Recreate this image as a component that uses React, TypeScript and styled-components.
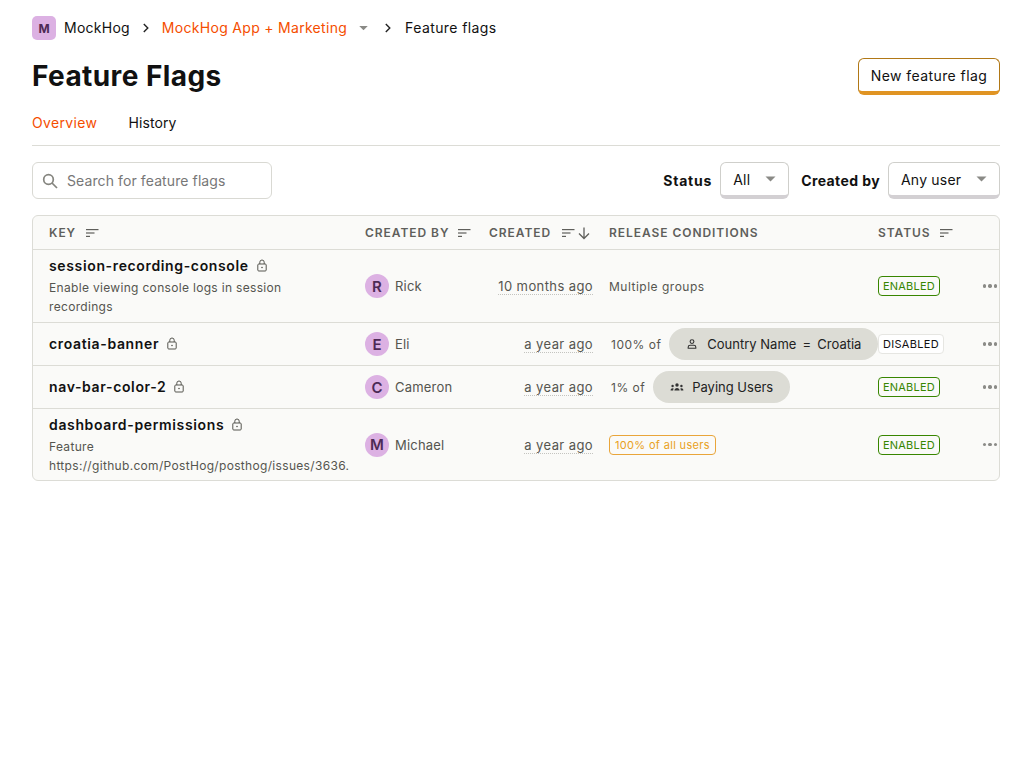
import React from "react";
import styled, { createGlobalStyle } from "styled-components";

const GlobalStyle = createGlobalStyle`
  html, body { margin: 0; padding: 0; background: #fff; }
  body { font-family: Inter, "Liberation Sans", sans-serif; color: #111; font-size: 14px; }
`;

type Flag = {
  key: string;
  desc?: string;
  user: string;
  created: string;
  status: "ENABLED" | "DISABLED";
  rowHeight: number;
};

const flags: Flag[] = [
  { key: "session-recording-console", desc: "Enable viewing console logs in session recordings", user: "Rick", created: "10 months ago", status: "ENABLED", rowHeight: 73 },
  { key: "croatia-banner", user: "Eli", created: "a year ago", status: "DISABLED", rowHeight: 43 },
  { key: "nav-bar-color-2", user: "Cameron", created: "a year ago", status: "ENABLED", rowHeight: 43 },
  { key: "dashboard-permissions", desc: "Feature https://github.com/PostHog/posthog/issues/3636.", user: "Michael", created: "a year ago", status: "ENABLED", rowHeight: 71 },
];

const SortIcon = () => (
  <svg width="14" height="10" viewBox="0 0 14 10" fill="#5f5f5b">
    <rect x="1" y="1" width="12.5" height="1.2" />
    <rect x="1" y="4.4" width="8.5" height="1.2" />
    <rect x="1" y="7.8" width="4" height="1.2" />
  </svg>
);

const LockIcon = () => (
  <svg width="12" height="13" viewBox="0 0 12 13" fill="none" stroke="#55554f" strokeWidth="1">
    <rect x="1.8" y="5" width="8.4" height="7" rx="1" />
    <path d="M3.8 5V3.2a2.2 2.2 0 0 1 4.4 0V5" />
    <circle cx="6" cy="8.5" r="0.8" fill="#55554f" stroke="none" />
  </svg>
);

const Caret = ({ color = "#8a8a86" }: { color?: string }) => (
  <svg width="11" height="6" viewBox="0 0 11 6" fill={color}>
    <path d="M0.5 0.5h10L5.5 5.5z" />
  </svg>
);

const Chevron = () => (
  <svg width="8" height="10" viewBox="0 0 8 10" fill="none" stroke="#222" strokeWidth="1.4">
    <path d="M1.8 1l4 4-4 4" />
  </svg>
);

const SearchIcon = () => (
  <svg width="18" height="18" viewBox="0 0 18 18" fill="none" stroke="#85857f" strokeWidth="1.7">
    <circle cx="7.5" cy="7.5" r="4.8" />
    <path d="M11 11l5 5" />
  </svg>
);

const PersonIcon = () => (
  <svg width="12" height="12" viewBox="0 0 12 12" fill="none" stroke="#333" strokeWidth="1.1">
    <circle cx="6" cy="3.6" r="1.9" />
    <path d="M2.2 10.2V9c0-1 1-1.7 2-1.7h3.6c1 0 2 .7 2 1.7v1.2z" />
  </svg>
);

const CohortIcon = () => (
  <svg width="14" height="12" viewBox="0 0 14 12" fill="#333">
    <circle cx="7" cy="4" r="1.7" />
    <circle cx="2.6" cy="5" r="1.2" />
    <circle cx="11.4" cy="5" r="1.2" />
    <path d="M4.4 9.5c0-1.6 1.2-2.6 2.6-2.6s2.6 1 2.6 2.6z" />
    <path d="M.6 9.5c0-1.3.8-2.2 2-2.2.4 0 .7.1 1 .2-.3.6-.4 1.2-.4 2z" />
    <path d="M13.4 9.5c0-1.3-.8-2.2-2-2.2-.4 0-.7.1-1 .2.3.6.4 1.2.4 2z" />
  </svg>
);

const ArrowDown = () => (
  <svg width="14" height="14" viewBox="0 0 14 14" fill="none" stroke="#5f5f5b" strokeWidth="1.3">
    <path d="M7 1.5v11M2 7.5l5 5 5-5" />
  </svg>
);

const Page = styled.div`
  padding: 16px 32px 0;
`;

const Breadcrumbs = styled.nav`
  display: flex;
  align-items: center;
  height: 24px;
`;

const LogoBadge = styled.div`
  width: 24px;
  height: 24px;
  border-radius: 5px;
  background: #dcb1e3;
  color: #4c2a55;
  font-size: 12px;
  font-weight: 700;
  display: flex;
  align-items: center;
  justify-content: center;
  margin-right: 8px;
`;

const Crumb = styled.span<{ $accent?: boolean; $spacing?: number }>`
  font-size: 14px;
  line-height: 22px;
  padding-bottom: 1px;
  letter-spacing: ${(p) => p.$spacing ?? 0.25}px;
  color: ${(p) => (p.$accent ? "#f54e00" : "#111")};
`;

const CrumbSep = styled.span<{ $wide?: boolean }>`
  display: flex;
  margin: ${(p) => (p.$wide ? "0 13px 0 9px" : "0 12px")};
`;

const CrumbCaret = styled.span`
  display: flex;
  margin-left: 11px;
  margin-right: 6px;
  transform: scale(0.85);
`;

const TitleRow = styled.header`
  display: flex;
  justify-content: space-between;
  align-items: flex-start;
  margin-top: 18px;
  height: 37px;
`;

const Title = styled.h1`
  margin: 0;
  font-size: 28px;
  line-height: 37px;
  font-weight: 700;
  letter-spacing: 0.42px;
`;

const NewButton = styled.button`
  box-sizing: border-box;
  height: 37px;
  width: 142px;
  padding: 0;
  border: 1px solid #b17816;
  border-bottom-width: 4px;
  border-bottom-color: #e09423;
  border-radius: 6px;
  background: #fff;
  font: 400 14px Inter, "Liberation Sans", sans-serif;
  letter-spacing: 0.42px;
  color: #111;
`;

const Tabs = styled.div`
  display: flex;
  gap: 31px;
  margin-top: 16px;
  height: 34px;
  border-bottom: 1px solid #dcdcd6;
`;

const Tab = styled.span<{ $active?: boolean }>`
  font-size: 14px;
  line-height: 24px;
  letter-spacing: ${(p) => (p.$active ? 0.35 : 0.1)}px;
  color: ${(p) => (p.$active ? "#f54e00" : "#111")};
`;

const FilterRow = styled.div`
  display: flex;
  justify-content: space-between;
  align-items: center;
  margin-top: 16px;
  height: 37px;
`;

const Search = styled.div`
  box-sizing: border-box;
  width: 240px;
  height: 37px;
  padding: 0 8px;
  display: flex;
  align-items: center;
  gap: 8px;
  border: 1px solid #d9d9d3;
  border-radius: 6px;
  font-size: 14px;
  letter-spacing: 0.1px;
  color: #777;
`;

const Filters = styled.div`
  display: flex;
  align-items: center;
`;

const FilterLabel = styled.span<{ $spacing: number }>`
  font-size: 14px;
  font-weight: 700;
  letter-spacing: ${(p) => p.$spacing}px;
  margin-right: 8px;
`;

const Select = styled.div<{ $width: number; $gapAfter?: number }>`
  box-sizing: border-box;
  width: ${(p) => p.$width}px;
  height: 37px;
  padding: 0 12px;
  margin-right: ${(p) => p.$gapAfter ?? 0}px;
  display: flex;
  align-items: center;
  justify-content: space-between;
  border: 1px solid #cfcfcb;
  border-bottom: 4px solid #d3d0d3;
  border-radius: 6px;
  font-size: 14px;
  letter-spacing: 0.2px;
`;

const TableWrap = styled.div`
  margin-top: 16px;
  border: 1px solid #dcdcd6;
  border-radius: 6px;
  overflow: hidden;
  background: #fafaf8;
`;

const Table = styled.table`
  width: 100%;
  table-layout: fixed;
  border-collapse: separate;
  border-spacing: 0;
`;

const Th = styled.th<{ $width?: number; $first?: boolean }>`
  box-sizing: border-box;
  width: ${(p) => (p.$width ? `${p.$width}px` : "auto")};
  height: 34px;
  padding: 0 0 0 ${(p) => (p.$first ? "16px" : "8px")};
  text-align: left;
  font-size: 12px;
  font-weight: 600;
  letter-spacing: 0.95px;
  color: #5f5f5b;
  border-bottom: 1px solid #dcdcd6;
  white-space: nowrap;
`;

const HeadCell = styled.span<{ $gap?: number }>`
  display: inline-flex;
  align-items: center;
  gap: ${(p) => p.$gap ?? 8.5}px;
`;

const HeadIcons = styled.span`
  display: inline-flex;
  align-items: center;
  gap: 2px;
`;

const Tr = styled.tr<{ $height: number }>`
  height: ${(p) => p.$height}px;
  &:not(:last-child) td {
    border-bottom: 1px solid #dcdcd6;
  }
`;

const Td = styled.td<{ $first?: boolean; $right?: boolean }>`
  box-sizing: border-box;
  padding: 0 ${(p) => (p.$right ? "8px" : "0")} 0 ${(p) => (p.$first ? "16px" : "8px")};
  text-align: ${(p) => (p.$right ? "right" : "left")};
  vertical-align: middle;
  font-size: 12px;
  letter-spacing: 0.35px;
  color: #55554f;
  white-space: nowrap;
`;

const KeyCell = styled(Td)`
  tr:last-child > & {
    padding-top: 2px;
  }
`;

const KeyLine = styled.div<{ $single: boolean }>`
  display: flex;
  align-items: center;
  gap: 7px;
  padding-bottom: ${(p) => (p.$single ? "2px" : "0")};
  font-size: 14px;
  line-height: 17px;
  font-weight: 600;
  letter-spacing: 0.64px;
  color: #111;
`;

const Description = styled.div`
  margin-top: 4px;
  width: 300px;
  white-space: normal;
  font-size: 12px;
  line-height: 19px;
  letter-spacing: 0.32px;
  color: #55554f;
`;

const UserCell = styled.div`
  display: flex;
  align-items: center;
  gap: 6px;
  font-size: 13px;
  letter-spacing: 0.2px;
`;

const Avatar = styled.div`
  width: 24px;
  height: 24px;
  border-radius: 50%;
  background: #dcb1e3;
  color: #4c2a55;
  font-size: 15px;
  font-weight: 600;
  letter-spacing: 0;
  display: flex;
  align-items: center;
  justify-content: center;
`;

const Dated = styled.span`
  display: inline-block;
  margin-top: 2px;
  font-size: 13px;
  line-height: 15px;
  letter-spacing: 0.4px;
  border-bottom: 1px dotted #c4c4c0;
`;

const PlainCondition = styled.div`
  letter-spacing: 0.5px;
`;

const Condition = styled.div`
  display: flex;
  align-items: center;
  gap: 8px;
  padding-left: 2px;
  letter-spacing: 0.5px;
`;

const Pill = styled.div`
  height: 32px;
  padding: 0 17px;
  display: flex;
  align-items: center;
  gap: 8px;
  border-radius: 16px;
  background: #dcdcd5;
  font-size: 13px;
  letter-spacing: 0;
  color: #222;
`;

const PillLabel = styled.span`
  margin-left: 1px;
`;

const Operator = styled.span`
  margin: 0 2.5px;
`;

const AllUsers = styled.span`
  display: inline-block;
  box-sizing: border-box;
  height: 20px;
  line-height: 18px;
  padding: 0 5px;
  border: 1px solid #e9a53a;
  border-radius: 4px;
  font-size: 11px;
  letter-spacing: 0.33px;
  color: #e9a121;
`;

const StatusTag = styled.span<{ $enabled: boolean }>`
  display: inline-block;
  box-sizing: border-box;
  height: 20px;
  line-height: 18px;
  padding: 0 4px;
  border: 1px solid ${(p) => (p.$enabled ? "#388600" : "#e6e6e2")};
  border-radius: 4px;
  background: ${(p) => (p.$enabled ? "transparent" : "#fff")};
  font-size: 11px;
  letter-spacing: ${(p) => (p.$enabled ? 0.2 : 0.3)}px;
  color: ${(p) => (p.$enabled ? "#388600" : "#111")};
`;

const Dots = styled.div`
  display: flex;
  gap: 2px;
  padding-left: 5px;
`;

const Dot = styled.span`
  width: 3.4px;
  height: 3.4px;
  border-radius: 50%;
  background: #8b8b87;
`;

function renderCondition(flag: Flag) {
  if (flag.key === "session-recording-console") return <PlainCondition>Multiple groups</PlainCondition>;
  if (flag.key === "croatia-banner") {
    return (
      <Condition>
        100% of
        <Pill>
          <PersonIcon />
          <PillLabel>Country Name <Operator>=</Operator> Croatia</PillLabel>
        </Pill>
      </Condition>
    );
  }
  if (flag.key === "nav-bar-color-2") {
    return (
      <Condition>
        1% of
        <Pill>
          <CohortIcon />
          Paying Users
        </Pill>
      </Condition>
    );
  }
  return <AllUsers>100% of all users</AllUsers>;
}

export default function App() {
  return (
    <Page>
      <GlobalStyle />
      <Breadcrumbs>
        <LogoBadge>M</LogoBadge>
        <Crumb>MockHog</Crumb>
        <CrumbSep><Chevron /></CrumbSep>
        <Crumb $accent $spacing={0.3}>MockHog App + Marketing</Crumb>
        <CrumbCaret><Caret /></CrumbCaret>
        <CrumbSep $wide><Chevron /></CrumbSep>
        <Crumb $spacing={0.4}>Feature flags</Crumb>
      </Breadcrumbs>

      <TitleRow>
        <Title>Feature Flags</Title>
        <NewButton>New feature flag</NewButton>
      </TitleRow>

      <Tabs>
        <Tab $active>Overview</Tab>
        <Tab>History</Tab>
      </Tabs>

      <FilterRow>
        <Search>
          <SearchIcon />
          Search for feature flags
        </Search>
        <Filters>
          <FilterLabel $spacing={0.8}>Status</FilterLabel>
          <Select $width={69} $gapAfter={12}>
            All
            <Caret />
          </Select>
          <FilterLabel $spacing={0.4}>Created by</FilterLabel>
          <Select $width={112}>
            Any user
            <Caret />
          </Select>
        </Filters>
      </FilterRow>

      <TableWrap>
        <Table>
          <thead>
            <tr>
              <Th $first $width={324}><HeadCell>KEY <SortIcon /></HeadCell></Th>
              <Th $width={124}><HeadCell $gap={8}>CREATED BY <SortIcon /></HeadCell></Th>
              <Th $width={120}>
                <HeadCell $gap={10}>
                  CREATED
                  <HeadIcons><SortIcon /><ArrowDown /></HeadIcons>
                </HeadCell>
              </Th>
              <Th $width={269}>RELEASE CONDITIONS</Th>
              <Th $width={100}><HeadCell>STATUS <SortIcon /></HeadCell></Th>
              <Th />
            </tr>
          </thead>
          <tbody>
            {flags.map((flag) => (
              <Tr key={flag.key} $height={flag.rowHeight}>
                <KeyCell $first>
                  <KeyLine $single={!flag.desc}>{flag.key} <LockIcon /></KeyLine>
                  {flag.desc && <Description>{flag.desc}</Description>}
                </KeyCell>
                <Td>
                  <UserCell>
                    <Avatar>{flag.user[0]}</Avatar>
                    {flag.user}
                  </UserCell>
                </Td>
                <Td $right><Dated>{flag.created}</Dated></Td>
                <Td>{renderCondition(flag)}</Td>
                <Td><StatusTag $enabled={flag.status === "ENABLED"}>{flag.status}</StatusTag></Td>
                <Td>
                  <Dots><Dot /><Dot /><Dot /></Dots>
                </Td>
              </Tr>
            ))}
          </tbody>
        </Table>
      </TableWrap>
    </Page>
  );
}
